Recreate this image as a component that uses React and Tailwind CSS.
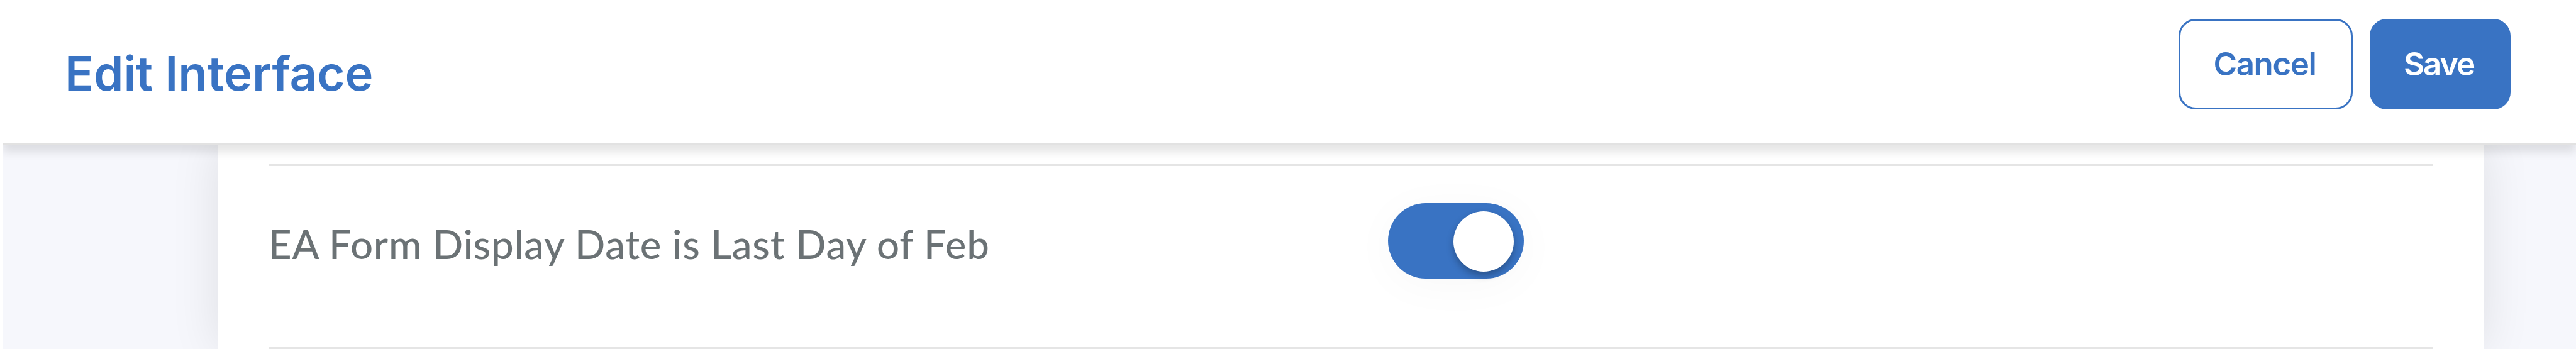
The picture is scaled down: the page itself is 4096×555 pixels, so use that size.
import React from "react";

function Header() {
  return (
    <header className="relative z-10 flex h-[230px] items-start justify-between border-b-[3px] border-[#e2e2e2] bg-white pl-[99px] pr-[104px] font-['Inter',sans-serif] shadow-[0_12px_14px_rgba(0,0,0,0.1)]">
      <h1 className="mt-[78px] text-[76px] leading-[77px] font-semibold text-[#3973c3]">
        Edit Interface
      </h1>
      <div className="mt-[30px] flex gap-[27px]">
        <button className="flex h-[144px] w-[277px] items-center justify-center rounded-[27px] border-[3px] border-[#3973c3] bg-white pr-[3px] text-[51px] font-semibold tracking-[-1.4px] text-[#3973c3]">
          Cancel
        </button>
        <button className="flex h-[144px] w-[224px] items-center justify-center rounded-[27px] bg-[#3973c3] pr-[4px] text-[51px] font-semibold tracking-[-2.2px] text-white">
          Save
        </button>
      </div>
    </header>
  );
}

function Toggle({ label }) {
  return (
    <button
      role="switch"
      aria-checked="true"
      aria-label={label}
      className="flex h-[120px] w-[216px] justify-end rounded-full bg-[#3973c3] pt-[13px] pr-[16px] shadow-[0_10px_72px_rgba(0,0,0,0.03)]"
    >
      <span className="size-[96px] rounded-full bg-white shadow-[0_6px_12px_rgba(0,0,0,0.28)]" />
    </button>
  );
}

function SettingRow({ label }) {
  return (
    <div className="flex h-[294px] items-start border-y-[3px] border-[#e5e5e5]">
      <span className="mt-[92px] w-[1780px] text-[63.5px] leading-[64px] font-medium tracking-[0.76px] whitespace-nowrap text-[#6b7275]">
        {label}
      </span>
      <div className="mt-[59px]">
        <Toggle label={label} />
      </div>
    </div>
  );
}

export default function App() {
  return (
    <div className="h-[555px] overflow-hidden bg-white pl-[4px] font-['Lato',sans-serif]">
      {/* clips the header shadow at the page's left edge */}
      <div className="h-full overflow-hidden">
        <Header />
        <main className="h-[325px] bg-[#f6f7fc] pl-[343px] pr-[147px]">
          <section className="h-full bg-white px-[80px] pt-[31px] shadow-[0_0_72px_rgba(0,0,0,0.1)]">
            <SettingRow label="EA Form Display Date is Last Day of Feb" />
          </section>
        </main>
      </div>
    </div>
  );
}
